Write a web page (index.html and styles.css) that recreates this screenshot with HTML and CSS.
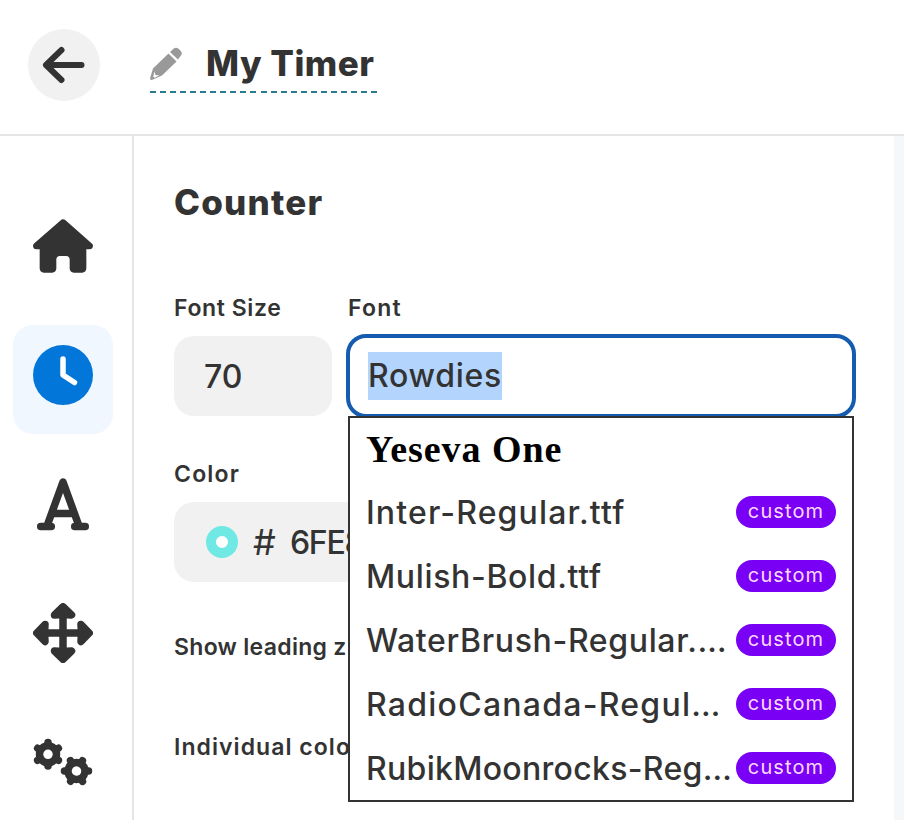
FILE: index.html
```
<!DOCTYPE html>
<html lang="en">
<head>
    <meta charset="UTF-8">
    <meta name="viewport" content="width=device-width, initial-scale=1.0">
    <title>My Timer</title>
    <link rel="stylesheet" href="styles.css">
</head>
<body>
    <header class="topbar">
        <button class="back" aria-label="Back">
            <svg width="72" height="72" viewBox="0 0 72 72"><path d="M53.500 36H18M33.500 21L18 36l15.500 15"/></svg>
        </button>
        <div class="timer-name">
            <svg width="34" height="34" viewBox="0 0 34 34">
                <path d="M18.500 6.500l8 8L12 28.500 3 32.500Q-.500 34 .300 30.500L3 21.500z"/>
                <path d="M20 5l3.500-3.200q2.500-2 5 0l2 2q2.500 2.500.200 5L28 12.500z"/>
                <path class="nib" d="M4.500 24.500l1 3.500 3.800.500-4.800 2.300-1.300-1z"/>
            </svg>
            <h1>My Timer</h1>
        </div>
    </header>

    <div class="main">
        <nav class="sidebar">
            <a class="tab">
                <svg width="60" height="54" viewBox="0 0 576 512"><path d="M575.8 255.5c0 18-15 32.100-32 32.100h-32l.7 160.200c0 2.700-.2 5.400-.5 8.100V472c0 22.100-17.900 40-40 40H392c-22.100 0-40-17.900-40-40V384c0-17.700-14.300-32-32-32H256c-17.700 0-32 14.300-32 32v88c0 22.100-17.900 40-40 40H104c-22.100 0-40-17.900-40-40V287.600H32c-18 0-32-14-32-32.100c0-9 3-17 10-24L266.400 8c7-7 15-8 22-8s15 2 21 7L564.800 231.500c8 7 12 15 11 24z"/></svg>
            </a>
            <a class="tab active">
                <svg width="60" height="60" viewBox="0 0 60 60"><circle cx="30" cy="30" r="30"/><path class="hands" d="M30 14v16l11.500 7.500"/></svg>
            </a>
            <a class="tab">
                <svg width="60" height="60" viewBox="0 0 60 60"><path class="line" d="M14 52L30 8l16 44M20 39.500h20M7.700 52.500h10.600M41.700 52.500h10.600"/></svg>
            </a>
            <a class="tab">
                <svg width="60" height="60" viewBox="0 0 60 60">
                    <path class="line" d="M30 6v48M6 30h48"/>
                    <path class="head" d="M21.500 12L30 3.800l8.500 8.200L30 11.500zM21.500 48l8.500 8.200 8.500-8.200L30 48.500zM12 21.500L3.800 30l8.200 8.500L11.500 30zM48 21.500l8.200 8.500-8.200 8.500L48.500 30z"/>
                </svg>
            </a>
            <a class="tab">
                <svg width="60" height="60" viewBox="0 0 60 60">
                    <g transform="translate(15 22.300)">
                        <circle class="gear" r="8.500"/>
                        <path class="teeth" d="M0-9v-2.800M0 9v2.800M7.800-4.500l2.600-1.500M7.800 4.500l2.600 1.500M-7.800-4.500l-2.600-1.500M-7.800 4.500l-2.600 1.500"/>
                    </g>
                    <g transform="translate(43.500 39) rotate(30)">
                        <circle class="gear" r="8.500"/>
                        <path class="teeth" d="M0-9v-2.800M0 9v2.800M7.800-4.500l2.600-1.500M7.800 4.500l2.600 1.500M-7.800-4.500l-2.600-1.500M-7.800 4.500l-2.600 1.500"/>
                    </g>
                </svg>
            </a>
        </nav>

        <section class="panel">
            <h2>Counter</h2>
            <div class="fields">
                <div class="field size">
                    <label>Font Size</label>
                    <div class="input">70</div>
                </div>
                <div class="field font">
                    <label>Font</label>
                    <div class="input focused"><span class="selected">Rowdies</span></div>
                    <div class="dropdown">
                        <div class="option yeseva"><span class="name">Yeseva One</span></div>
                        <div class="option"><span class="name inter">Inter-Regular.ttf</span><span class="badge">custom</span></div>
                        <div class="option"><span class="name mulish">Mulish-Bold.ttf</span><span class="badge">custom</span></div>
                        <div class="option"><span class="name water">WaterBrush-Regular.…</span><span class="badge">custom</span></div>
                        <div class="option"><span class="name radio">RadioCanada-Regul…</span><span class="badge">custom</span></div>
                        <div class="option"><span class="name rubik">RubikMoonrocks-Reg…</span><span class="badge">custom</span></div>
                    </div>
                </div>
            </div>
            <div class="field color">
                <label>Color</label>
                <div class="input"><span class="swatch"></span><span class="hash">#</span><span class="hex">6FE8</span></div>
            </div>
            <div class="toggle leading">Show leading z</div>
            <div class="toggle individual">Individual colo</div>
        </section>
    </div>
</body>
</html>
```
FILE: styles.css
```
* {
    box-sizing: border-box;
}
body {
    margin: 0;
    height: 820px;
    overflow: hidden;
    font-family: Inter, sans-serif;
    color: #333;
    background-color: #fff;
}
h1, h2 {
    margin: 0;
    font-weight: 800;
}
.topbar {
    display: flex;
    height: 136px;
    padding: 29px 28px 0;
    border-bottom: 2px solid #e5e5e5;
}
.back {
    width: 72px;
    height: 72px;
    padding: 0;
    border: none;
    border-radius: 50%;
    background-color: #f1f1f1;
}
.back svg {
    display: block;
    fill: none;
    stroke: #333;
    stroke-width: 6;
    stroke-linecap: round;
    stroke-linejoin: round;
}
.timer-name {
    display: flex;
    width: 227px;
    height: 64px;
    margin-left: 50px;
    padding-top: 11px;
    background: repeating-linear-gradient(90deg, #2a7a92 0 6px, transparent 6px 10.050px) bottom / 100% 2px no-repeat;
}
.timer-name svg {
    flex-shrink: 0;
    margin-top: 7px;
    fill: #999;
}
.timer-name .nib {
    fill: #fff;
}
.timer-name h1 {
    margin-left: 22px;
    font-size: 35px;
    line-height: 46px;
    letter-spacing: 0.500px;
    white-space: nowrap;
}
.main {
    display: flex;
    height: 684px;
    background-color: #f6f7f9;
}
.sidebar {
    display: flex;
    flex-direction: column;
    gap: 20px;
    width: 134px;
    padding: 60px 0 0 13px;
    border-right: 2px solid #e5e5e5;
    background-color: #fff;
}
.tab {
    display: flex;
    flex-shrink: 0;
    align-items: center;
    justify-content: center;
    width: 100px;
    height: 109px;
    padding-bottom: 9px;
    border-radius: 20px;
    fill: #333;
}
.tab.active {
    background-color: #f1f7fe;
    fill: #0276d9;
}
.hands, .line, .head, .gear, .teeth {
    stroke: #333;
    stroke-width: 7.500;
    stroke-linecap: round;
    stroke-linejoin: round;
}
.hands, .line, .gear {
    fill: none;
}
.hands {
    stroke: #fff;
    stroke-width: 5.500;
}
.panel {
    width: 760px;
    padding: 43px 40px 0;
    background-color: #fff;
}
.panel h2 {
    font-size: 35px;
    line-height: 46px;
    letter-spacing: 1.200px;
}
.fields {
    display: flex;
    gap: 16px;
    margin-top: 67px;
}
.field label {
    display: block;
    height: 44px;
    font-size: 23px;
    font-weight: 600;
    line-height: 32px;
    letter-spacing: 0.600px;
}
.field.font label, .field.color label {
    letter-spacing: 1.200px;
}
.field.size {
    width: 158px;
}
.field.font {
    position: relative;
    width: 506px;
}
.input {
    display: flex;
    align-items: center;
    height: 80px;
    padding: 0 30px;
    border-radius: 20px;
    background-color: #f1f1f1;
    font-size: 32px;
    font-weight: 500;
}
.input.focused {
    padding: 0 20px;
    border-radius: 18px;
    background-color: #fff;
    outline: 4px solid #155cb0;
    outline-offset: -2px;
}
.selected {
    width: 134px;
    height: 48px;
    line-height: 48px;
    letter-spacing: 0.700px;
    background-color: #b3d5fd;
    white-space: nowrap;
}
.dropdown {
    position: absolute;
    top: 124px;
    left: 0;
    width: 506px;
    height: 386px;
    border: 2px solid #333;
    background-color: #fff;
}
.option {
    display: flex;
    align-items: center;
    justify-content: space-between;
    height: 64px;
    padding: 0 16px;
    font-size: 32px;
    font-weight: 500;
    white-space: nowrap;
}
.option.yeseva {
    height: 62px;
    color: #000;
    font-family: "Liberation Serif", serif;
    font-size: 38px;
    font-weight: 700;
    letter-spacing: 0.950px;
}
.name.inter {
    letter-spacing: 1.150px;
}
.name.mulish {
    letter-spacing: 0.650px;
}
.name.water {
    letter-spacing: 0.650px;
}
.name.radio {
    letter-spacing: 1.250px;
}
.name.rubik {
    letter-spacing: 0.300px;
}
.badge {
    flex-shrink: 0;
    width: 100px;
    height: 32px;
    border-radius: 16px;
    background-color: #7a00f5;
    color: #fcd9ff;
    font-size: 20px;
    font-weight: 400;
    line-height: 31px;
    letter-spacing: 1.100px;
    text-align: center;
}
.field.color {
    width: 300px;
    margin-top: 42px;
}
.swatch {
    width: 32px;
    height: 32px;
    margin: 0 15px 0 2px;
    border: 10px solid #70e8e4;
    border-radius: 50%;
    background-color: #fff;
}
.hash {
    width: 37px;
    font-size: 36px;
    font-weight: 400;
}
.hex {
    letter-spacing: -1.300px;
}
.toggle {
    width: 180px;
    margin-top: 49px;
    font-size: 23px;
    font-weight: 600;
    line-height: 32px;
    letter-spacing: 0.300px;
    white-space: nowrap;
    overflow: hidden;
}
.toggle.individual {
    margin-top: 68px;
    letter-spacing: 1.050px;
}
```
